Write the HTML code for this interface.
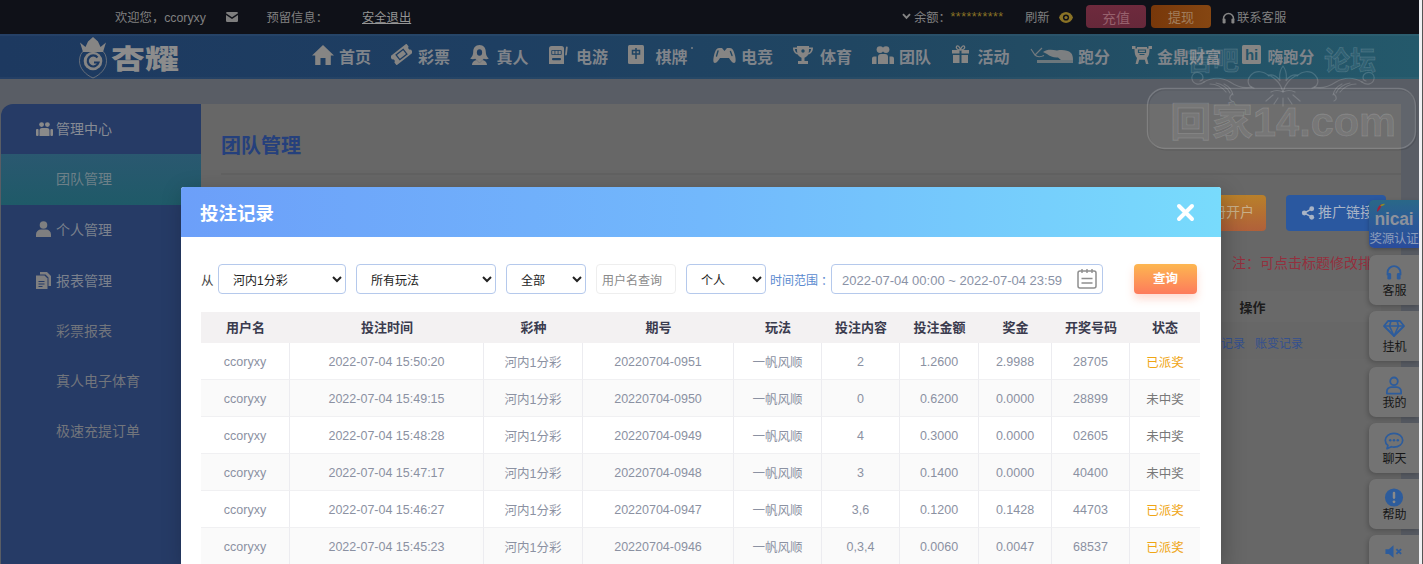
<!DOCTYPE html>
<html lang="zh-CN">
<head>
<meta charset="utf-8">
<title>团队管理</title>
<style>
*{box-sizing:border-box;margin:0;padding:0}
html,body{width:1423px;height:564px;overflow:hidden}
body{position:relative;background:#595d65;font-family:"Liberation Sans","Noto Sans CJK SC",sans-serif;font-size:13px;color:#333}
.abs{position:absolute}
/* top bar */
#top{left:0;top:0;width:1419px;height:34px;background:#0f1118;color:#808080;font-size:12.3px}
#top span{position:absolute;top:0;line-height:36px;white-space:nowrap}
/* nav */
#nav{left:0;top:34px;width:1419px;height:45px;background:linear-gradient(90deg,#1d3960 0%,#1e3f62 35%,#204662 60%,#224b63 72%,#235267 85%,#24596b 100%);box-shadow:inset 0 2px 0 rgba(255,255,255,.04),inset 0 -2px 0 rgba(255,255,255,.03)}
#nav .it{position:absolute;top:0;height:45px;line-height:47px;font-size:16px;font-weight:bold;color:#80848a;white-space:nowrap}
/* sidebar */
#side{left:1px;top:104px;width:200px;height:460px;background:#263b66;border-top-left-radius:12px;color:#7b818d;font-size:14px}
#side div{position:absolute;left:0;width:200px;white-space:nowrap;line-height:20px}
#main{left:201px;top:104px;width:1200px;height:460px;background:#676767}
/* scrollbar strip */
#sb1{left:1419px;top:0;width:3px;height:564px;background:#eff0f3}
#sb2{left:1422px;top:0;width:1px;height:564px;background:#555}
/* modal */
#modal{left:181px;top:187px;width:1040px;height:377px;background:#fff;border-radius:3px 3px 0 0;box-shadow:3px 6px 22px rgba(0,0,0,.25)}
#mh{left:0;top:0;width:1040px;height:50px;border-radius:3px 3px 0 0;background:linear-gradient(90deg,#6c9ff9 0%,#72b8fc 50%,#78dbfc 100%);color:#fff;font-size:18.500px;font-weight:bold;line-height:53px;padding-left:19px}
select,.inp{position:absolute;height:30px;border:1px solid #b5c9ec;border-radius:4px;background:#fff;font-size:12px;color:#222;font-family:inherit;padding:3px 0 0 10px}
table{position:absolute;left:20px;top:125px;width:999px;border-collapse:separate;border-spacing:0;table-layout:fixed;font-size:12.5px}
th{height:31px;background:#f3f1f2;color:#3a3b4e;font-weight:bold;font-size:13px;text-align:center;padding-bottom:2px}
td{height:37px;text-align:center;color:#8b91a2;border-right:1px solid #ececf0;border-bottom:1px solid #f0f0f2;padding-top:1px}
tr:nth-child(odd) td{background:#fafafa}
td:last-child{border-right:none}
td.y{color:#efa514}
td.n{color:#787878}
.btn{height:36px;border-radius:4px;font-size:14px;line-height:35px;text-align:center;white-space:nowrap}

#tb{left:1369px;top:200px;width:50px;height:364px}
#tb .badge{position:absolute;left:0;top:0;width:50px;height:48px;border-radius:5px 0 0 5px;background:linear-gradient(180deg,#2a6888 0%,#2b5a96 45%,#2a4c9c 100%);box-shadow:0 2px 4px rgba(0,0,0,.25);text-align:center;overflow:hidden;white-space:nowrap}
#tb .badge b{position:absolute;left:0;top:9px;width:50px;font-size:17.500px;line-height:20px;color:#8d929c;letter-spacing:-.2px}
#tb .badge i{position:absolute;left:-1px;top:31px;width:52px;font-style:normal;font-size:12.500px;line-height:16px;color:#8b9cba;letter-spacing:-.3px}
#tb .tbx{position:absolute;left:0;width:50px;height:50px;border-radius:7px 0 0 7px;background:#737373;box-shadow:-1px 2px 5px rgba(0,0,0,.22);text-align:center}
#tb .tbx svg{position:absolute;left:50%;top:9px;transform:translateX(-50%)}
#tb .tbx span{position:absolute;left:0;top:28px;width:51px;font-size:12px;line-height:16px;color:#161616}
</style>
</head>
<body>
<div id="top" class="abs">
<span style="left:115px">欢迎您，ccoryxy</span>
<svg class="abs" style="left:226px;top:11.500px" width="12" height="10" viewBox="0 0 12 10"><path d="M0 1.200A1.200 1.200 0 0 1 1.200 0h9.600A1.200 1.200 0 0 1 12 1.200L6 5.300zM0 2.900l6 4 6-4V8.800A1.200 1.200 0 0 1 10.800 10H1.200A1.200 1.200 0 0 1 0 8.800z" fill="#7e7e7e"/></svg>
<span style="left:266.500px">预留信息：</span>
<span style="left:362px;text-decoration:underline;color:#959595">安全退出</span>
<svg class="abs" style="left:902px;top:13px" width="9" height="7" viewBox="0 0 9 7"><path d="M1 1.200l3.500 3.600L8 1.200" fill="none" stroke="#858585" stroke-width="1.900"/></svg>
<span style="left:914px">余额：</span>
<span style="left:950.500px;color:#8a7326;letter-spacing:.45px;font-size:12.500px;line-height:34px">**********</span>
<span style="left:1025px">刷新</span>
<svg class="abs" style="left:1058.500px;top:12px" width="14" height="11" viewBox="0 0 14 11"><path d="M7 0c3.200 0 5.800 2.200 7 5.500C12.800 8.800 10.200 11 7 11S1.200 8.800 0 5.500C1.200 2.200 3.800 0 7 0z" fill="#8a7326"/><circle cx="7" cy="5.500" r="3.100" fill="#0f1118"/><circle cx="7" cy="5.500" r="1.600" fill="#8a7326"/></svg>
<svg class="abs" style="left:1222px;top:11.500px" width="13" height="12" viewBox="0 0 13 12"><path d="M1.500 8V6.500a5 5 0 0 1 10 0V8" fill="none" stroke="#858585" stroke-width="1.500"/><rect x=".6" y="6.500" width="3" height="5" rx="1.200" fill="#858585"/><rect x="9.400" y="6.500" width="3" height="5" rx="1.200" fill="#858585"/></svg>
<span style="left:1237px">联系客服</span>
</div>
<div class="abs" style="left:1086px;top:5px;width:60px;height:23px;border-radius:4px;background:linear-gradient(180deg,#6e2a3d,#66283a);color:#97616d;font-size:14px;text-align:center;line-height:26px">充值</div>
<div class="abs" style="left:1151px;top:5px;width:60px;height:23px;border-radius:4px;background:linear-gradient(90deg,#78380a,#854612);color:#a17e5e;font-size:13px;text-align:center;line-height:26px">提现</div>

<div id="nav" class="abs">
<svg class="abs" style="left:78px;top:2px" width="30" height="43" viewBox="0 0 30 43">
<path d="M2 6.500L7.500 11 10 5.500 15 1 20 5.500 22.500 11 28 6.500 25 16H5z" fill="#868584"/>
<path d="M15 12.500c7 0 13 2 13.500 12 .3 8-6.500 14.500-13.500 17.500C8 39 1.200 32.500 1.500 24.500 2 14.500 8 12.500 15 12.500z" fill="none" stroke="#868584" stroke-width="1" opacity=".7"/>
<circle cx="15" cy="25" r="9.300" fill="#868584"/>
<path d="M19.500 21.500a5.500 5.500 0 1 0 1 5h-4.500" fill="none" stroke="#1d3960" stroke-width="2.200"/>
</svg>
<div class="it" style="left:111px;top:3px;font-size:34px;font-weight:900;letter-spacing:0;color:#8c8c8c;line-height:45px;transform:scaleY(.81);transform-origin:50% 50%">杏耀</div>
<svg class="abs" style="left:312px;top:11px" width="22" height="20" viewBox="0 0 22 20"><path d="M11 0L22 10.500H18.800V20H13.500V13H8.500V20H3.200V10.500H0z" fill="#868584"/></svg>
<div class="it" style="left:339px">首页</div>
<svg class="abs" style="left:391px;top:10px" width="21" height="21" viewBox="0 0 21 21"><g transform="rotate(-38 10.500 10.500)"><path d="M0 5h21v3.600a2 2 0 0 0 0 3.800V16H0v-3.600a2 2 0 0 0 0-3.800z" fill="#868584"/><path d="M6 7.500h9v6H6z" fill="none" stroke="#1e3d62" stroke-width="1.300"/></g></svg>
<div class="it" style="left:418px">彩票</div>
<svg class="abs" style="left:470px;top:11px" width="19" height="20" viewBox="0 0 19 20"><path d="M9.500 0c4.200 0 6.300 3 6.300 7 0 3 1.200 5 3 6.500-1.500.8-3.500.8-5 .2L9.500 18l-4.300-4.300c-1.500.6-3.500.6-5-.2C2 12 3.200 10 3.200 7c0-4 2.100-7 6.300-7z" fill="#868584"/><ellipse cx="9.500" cy="7.500" rx="2.600" ry="3.300" fill="#1e3d62"/><path d="M2 20c0-3 2.500-4.500 4.500-5l3 3 3-3c2 .5 4.500 2 4.500 5z" fill="#868584"/></svg>
<div class="it" style="left:496.500px">真人</div>
<svg class="abs" style="left:549px;top:12px" width="20" height="18" viewBox="0 0 20 18"><path d="M2.500 0h10a2.500 2.500 0 0 1 2.500 2.500V18H0V2.500A2.500 2.500 0 0 1 2.500 0z" fill="#868584"/><rect x="2.300" y="4" width="10.400" height="5" rx="1" fill="#1f4162"/><rect x="3.200" y="4.800" width="2.300" height="3.400" fill="#868584"/><rect x="6.350" y="4.800" width="2.300" height="3.400" fill="#868584"/><rect x="9.500" y="4.800" width="2.300" height="3.400" fill="#868584"/><rect x="3" y="12" width="9" height="2.300" rx="1" fill="#1f4162"/><path d="M17.800 1.500l-.8 7" stroke="#868584" stroke-width="1.800" stroke-linecap="round"/></svg>
<div class="it" style="left:576px">电游</div>
<svg class="abs" style="left:628px;top:11px" width="16" height="19" viewBox="0 0 16 19"><rect x="0" y="0" width="16" height="19" rx="1.500" fill="#868584"/><path d="M8 3v11M4.500 5.500h7v3.500h-7z" fill="none" stroke="#1f4362" stroke-width="1.500"/></svg>
<div class="it" style="left:655.500px">棋牌</div>
<div class="abs" style="left:691px;top:13px;width:2px;height:2px;border-radius:1px;background:#7a7f86"></div>
<svg class="abs" style="left:713px;top:14px" width="23" height="15" viewBox="0 0 23 15"><path d="M6 0h3l2.500 3L14 0h3c2.500 0 4 3 5 7.500s1 7.500-1 7.500c-2 0-3.500-3-5-5h-9c-1.500 2-3 5-5 5s-2-3-1-7.500S3.500 0 6 0z" fill="#868584"/><path d="M5 3l-1.500 5M17.500 3.500l1.500 4" stroke="#204662" stroke-width="1.400" stroke-linecap="round"/></svg>
<div class="it" style="left:741px">电竞</div>
<svg class="abs" style="left:793px;top:12px" width="20" height="18" viewBox="0 0 20 18"><path d="M4 0h12v1.500h4c0 4-2 6.500-4.800 7-1 1.800-2.300 2.800-3.700 3.200V15H15v3H5v-3h3.500v-3.300C7.100 11.300 5.800 10.300 4.800 8.500 2 8 0 5.500 0 1.500h4zM1.800 3c.3 2 1.200 3.300 2.500 3.900C4.100 5.700 4 4.400 4 3zm16.400 0H16c0 1.400-.1 2.700-.3 3.900 1.300-.6 2.200-1.900 2.500-3.900z" fill="#868584"/><circle cx="10" cy="5" r="1.700" fill="#214863"/></svg>
<div class="it" style="left:820px">体育</div>
<svg class="abs" style="left:872px;top:12px" width="22" height="18" viewBox="0 0 22 18"><circle cx="8" cy="3.600" r="3.400" fill="#868584"/><circle cx="14" cy="3.600" r="3.400" fill="#868584"/><path d="M6 18V11a3 3 0 0 1 3-3h4a3 3 0 0 1 3 3v7z" fill="#868584"/><path d="M0 18v-5.500a2 2 0 0 1 2-2h2.500V18zM17.500 18v-7.500H20a2 2 0 0 1 2 2V18z" fill="#868584"/></svg>
<div class="it" style="left:899px">团队</div>
<svg class="abs" style="left:951.500px;top:11px" width="17" height="18" viewBox="0 0 17 18"><path d="M0 5h7.500v3.500H0zM9.500 5H17v3.500H9.500zM1 10h6.500v8H1zM9.500 10H16v8H9.500z" fill="#868584"/><path d="M8.500 5C6 5 3.500 3.500 4.500 1.500S8 2 8.500 5zm0 0c2.500 0 5-1.500 4-3.500S9 2 8.500 5z" fill="none" stroke="#868584" stroke-width="1.300"/></svg>
<div class="it" style="left:977.500px">活动</div>
<svg class="abs" style="left:1029px;top:12px" width="44" height="18" viewBox="0 0 44 18"><path d="M2 3l4 6 7-7M6 9c2 2 6 2 9 .5" fill="none" stroke="#868584" stroke-width="1.200" opacity=".8"/><path d="M14 6c4-3 9-2.500 14-1.500 5-1 11-.5 14 2.500 1.500 1.500 2 4 2 7H32l-3-2.500c-4 .5-8-1-11-3.500z" fill="#868584" opacity=".9"/><path d="M8 14h36v3H8z" fill="#868584" opacity=".75"/></svg>
<div class="it" style="left:1078px">跑分</div>
<svg class="abs" style="left:1130.500px;top:12px" width="22" height="18" viewBox="0 0 22 18"><path d="M1 0h3.500v2.500H6V1h10v1.500h1.500V0H21v3h-2.500c0 4-.5 7-2.500 9l1.500 6h-2.500l-1.200-4.200h-5.600L7 18H4.500L6 12C4 10 3.500 7 3.500 3H1z" fill="#868584"/><path d="M7.500 4h7v2.500h-7zM8.500 8.500h5" stroke="#235066" stroke-width="1.200" fill="none"/></svg>
<div class="it" style="left:1157px">金鼎财富</div>
<svg class="abs" style="left:1241.500px;top:11px" width="19" height="19" viewBox="0 0 19 19"><rect width="19" height="19" rx="1.500" fill="#868584"/><text x="9.600" y="15" font-family="Liberation Sans,sans-serif" font-weight="bold" font-size="15" text-anchor="middle" fill="#235468">hi</text></svg>
<div class="it" style="left:1267.500px;font-size:15.600px">嗨跑分</div>
</div>

<div id="side" class="abs">
<div style="top:50px;height:51px;background:linear-gradient(180deg,#2a5870,#1f5a68)"></div>
<div style="top:15px;padding-left:55px;color:#868b94">管理中心</div>
<div style="top:65px;padding-left:55px;color:#6d8088">团队管理</div>
<div style="top:116px;padding-left:55px">个人管理</div>
<div style="top:167px;padding-left:55px">报表管理</div>
<div style="top:217px;padding-left:55px;color:#72757c">彩票报表</div>
<div style="top:267px;padding-left:55px;color:#72757c">真人电子体育</div>
<div style="top:317px;padding-left:55px;color:#72757c">极速充提订单</div>
<svg class="abs" style="left:35px;top:18px" width="17" height="14" viewBox="0 0 17 14"><g fill="#8a8a8a"><circle cx="5.600" cy="2.600" r="2.400"/><circle cx="11.400" cy="2.600" r="2.400"/><path d="M3.500 14V8.500a2.500 2.500 0 0 1 2.500-2.500h5a2.500 2.500 0 0 1 2.500 2.500V14z"/><rect x="0" y="7" width="2.600" height="7" rx="1"/><rect x="14.400" y="7" width="2.600" height="7" rx="1"/></g></svg>
<svg class="abs" style="left:35px;top:117px" width="15" height="16" viewBox="0 0 15 16"><g fill="#7f7f80"><circle cx="7.500" cy="4" r="3.800"/><path d="M0 16v-2.500a5 5 0 0 1 5-5h5a5 5 0 0 1 5 5V16z"/></g></svg>
<svg class="abs" style="left:35px;top:168px" width="15" height="17" viewBox="0 0 15 17"><g fill="#7f7f80"><path d="M4 0h7l4 4v10h-2.500V5.500L9.500 2.500H4z"/><path d="M0 3.500h8.500l3 3V17H0z"/></g><path d="M2.500 9.500h6M2.500 12h6M2.500 14.500h4" stroke="#263b66" stroke-width="1.100"/></svg>
</div>
<div id="main" class="abs">
<div class="abs" style="left:20px;top:27px;font-size:20px;line-height:30px;font-weight:bold;color:#25407c">团队管理</div>
<div class="abs" style="left:20px;top:69px;width:1180px;height:2px;background:#616161"></div>
<div class="abs btn" style="left:985px;top:91px;width:80px;background:linear-gradient(180deg,#b9802a,#b0603a);color:#c9b08a">注册开户</div>
<div class="abs btn" style="left:1085px;top:91px;width:99.500px;background:#2a58a0;color:#a9b4c6;text-align:left;padding-left:32px">推广链接</div>
<svg class="abs" style="left:1099.500px;top:102px" width="14" height="14" viewBox="0 0 14 15"><g fill="#a9b4c6"><circle cx="11" cy="3" r="2.6"/><circle cx="3" cy="7.5" r="2.6"/><circle cx="11" cy="12" r="2.6"/></g><path d="M11 3L3 7.5L11 12" stroke="#a9b4c6" stroke-width="1.6" fill="none"/></svg>
<div class="abs" style="left:1031px;top:148px;font-size:14px;color:#94303e;white-space:nowrap;width:140px;overflow:hidden">注：可点击标题修改排</div>
<div class="abs" style="left:0;top:187px;width:1180px;height:31px;background:#696969"></div>
<div class="abs" style="left:1038.500px;top:192.500px;font-size:13px;font-weight:bold;color:#1c1c1c">操作</div>
<div class="abs" style="left:0;top:255px;width:1180px;height:1px;background:#686868"></div>
<div class="abs" style="left:996px;top:230px;font-size:12px;color:#34508e;white-space:nowrap">投注记录&nbsp;&nbsp;&nbsp;账变记录</div>
</div>


<!-- watermark -->
<svg id="wm" class="abs" style="left:1140px;top:40px" width="279" height="115" viewBox="0 0 279 115">
<g font-family="Liberation Sans,Noto Sans CJK SC,sans-serif" font-weight="bold" fill="rgba(255,255,255,.08)" stroke="rgba(255,255,255,.15)" stroke-width=".8">
<text x="47" y="30" font-size="26" textLength="52">吉吧</text>
<text x="184" y="30" font-size="26" textLength="52">论坛</text>
<text x="30" y="96" font-size="40" textLength="226" lengthAdjust="spacingAndGlyphs">回家14.com</text>
</g>
<rect x="8.500" y="49.700" width="268" height="60" rx="17" fill="none" stroke="rgba(0,0,0,.10)" stroke-width="1.400"/><rect x="7.500" y="48.500" width="268" height="60" rx="17" fill="rgba(255,255,255,.05)" stroke="rgba(255,255,255,.17)" stroke-width="1.400"/>
<g fill="none" stroke="rgba(255,255,255,.16)" stroke-width="1.200" stroke-linecap="round">
<path d="M143 52c-2-8-8-14-14-17 4-1 9 2 11 6-1-6 0-11 3-15 3 4 4 9 3 15 2-4 7-7 11-6-6 3-12 9-14 17z"/>
<path d="M143 52c-4-2-8-2-12 0M143 52c4-2 8-2 12 0M138 58l-4 6M143 58v8M148 58l4 6M133 55l-7 6M153 55l7 6"/>
<path d="M129 36c-5-5-13-6-18-1s-3 12 3 13M157 36c5-5 13-6 18-1s3 12-3 13"/>
<path d="M112 47c-8 2-16-1-22-5-8-5-18-5-26 0M174 47c8 2 16-1 22-5 8-5 18-5 26 0"/>
<path d="M64 42c-5 4-11 2-12-3s4-8 8-6 4 7 0 8M222 42c5 4 11 2 12-3s-4-8-8-6-4 7 0 8"/>
<path d="M70 44c6 0 12 3 16 8M76 43c6 1 12 5 14 10M84 44c4 2 8 6 9 11M216 44c-6 0-12 3-16 8M210 43c-6 1-12 5-14 10M202 44c-4 2-8 6-9 11"/>
<path d="M92 54c-3 3-3 6 0 7M194 54c3 3 3 6 0 7"/>
</g>
</svg>
<div id="modal" class="abs">
<div id="mh" class="abs">投注记录</div>
<svg class="abs" style="left:995px;top:16px" width="19" height="19" viewBox="0 0 19 19"><path d="M3 3l13 13M16 3L3 16" stroke="#fff" stroke-width="4" stroke-linecap="round"/></svg>

<div class="abs" style="left:20px;top:84.500px;font-size:12.500px;line-height:18px;color:#444">从</div>
<select style="left:37px;top:77px;width:128px"><option>河内1分彩</option></select>
<select style="left:175px;top:77px;width:140px"><option>所有玩法</option></select>
<select style="left:325px;top:77px;width:80px"><option>全部</option></select>
<div class="inp" style="left:415px;top:77px;width:80px;border-color:#eee;color:#8a8a8a;line-height:32px;padding:0 0 0 5px">用户名查询</div>
<select style="left:505px;top:77px;width:80px"><option>个人</option></select>
<div class="abs" style="left:589px;top:84px;font-size:12px;color:#5a8ad0;white-space:nowrap">时间范围<span style="margin-left:3px">：</span></div>
<div class="inp" style="left:650px;top:77px;width:272px;color:#8a92a6;line-height:31px;padding:0 0 0 10px;font-size:13px">2022-07-04 00:00 ~ 2022-07-04 23:59</div>
<svg class="abs" style="left:896px;top:81px" width="20" height="21" viewBox="0 0 20 21"><rect x="1" y="3" width="18" height="17" rx="2" fill="none" stroke="#8e8e8e" stroke-width="1.500"/><path d="M5 1v4M10 1v4M15 1v4" stroke="#8e8e8e" stroke-width="1.400"/><path d="M4.500 10.500h11M4.500 15h11" stroke="#8e8e8e" stroke-width="1.600"/></svg>
<div class="abs" style="left:953px;top:77px;width:63px;height:30px;border-radius:4px;background:linear-gradient(180deg,#fdb650,#fd7b5c);color:#fff;font-size:12.500px;font-weight:bold;text-align:center;line-height:31px;box-shadow:0 5px 9px rgba(252,125,88,.28)">查询</div>
<table>
<colgroup><col style="width:89px"><col style="width:194px"><col style="width:99px"><col style="width:151px"><col style="width:88px"><col style="width:78px"><col style="width:79px"><col style="width:73px"><col style="width:78px"><col style="width:70px"></colgroup>
<tr><th>用户名</th><th>投注时间</th><th>彩种</th><th>期号</th><th>玩法</th><th>投注内容</th><th>投注金额</th><th>奖金</th><th>开奖号码</th><th>状态</th></tr>
<tr><td>ccoryxy</td><td>2022-07-04 15:50:20</td><td>河内1分彩</td><td>20220704-0951</td><td>一帆风顺</td><td>2</td><td>1.2600</td><td>2.9988</td><td>28705</td><td class="y">已派奖</td></tr>
<tr><td>ccoryxy</td><td>2022-07-04 15:49:15</td><td>河内1分彩</td><td>20220704-0950</td><td>一帆风顺</td><td>0</td><td>0.6200</td><td>0.0000</td><td>28899</td><td class="n">未中奖</td></tr>
<tr><td>ccoryxy</td><td>2022-07-04 15:48:28</td><td>河内1分彩</td><td>20220704-0949</td><td>一帆风顺</td><td>4</td><td>0.3000</td><td>0.0000</td><td>02605</td><td class="n">未中奖</td></tr>
<tr><td>ccoryxy</td><td>2022-07-04 15:47:17</td><td>河内1分彩</td><td>20220704-0948</td><td>一帆风顺</td><td>3</td><td>0.1400</td><td>0.0000</td><td>40400</td><td class="n">未中奖</td></tr>
<tr><td>ccoryxy</td><td>2022-07-04 15:46:27</td><td>河内1分彩</td><td>20220704-0947</td><td>一帆风顺</td><td>3,6</td><td>0.1200</td><td>0.1428</td><td>44703</td><td class="y">已派奖</td></tr>
<tr><td>ccoryxy</td><td>2022-07-04 15:45:23</td><td>河内1分彩</td><td>20220704-0946</td><td>一帆风顺</td><td>0,3,4</td><td>0.0060</td><td>0.0047</td><td>68537</td><td class="y">已派奖</td></tr>
</table>
</div>


<!-- right toolbar -->
<div id="tb" class="abs">
<div class="badge"><b>nicai</b><i>奖源认证</i><svg style="position:absolute;left:7px;top:3px" width="10" height="10" viewBox="0 0 10 10"><path d="M1 9C1 5 3 2 6 1 5 4 4 7 1 9z" fill="#a0203a"/><path d="M4 3C5 1.500 7 .5 9 1 8 2.500 6 3.500 4 3z" fill="#8a8a2a"/></svg></div>
<div class="tbx" style="top:55px"><svg viewBox="0 0 20 18" width="19" height="17"><path d="M3.2 12V9a6.8 6.8 0 0 1 13.6 0v3" fill="none" stroke="#2d5c9c" stroke-width="2"/><rect x="3" y="9.5" width="4" height="7" rx="1.5" fill="#2d5c9c"/><rect x="13" y="9.5" width="4" height="7" rx="1.5" fill="#2d5c9c"/></svg><span>客服</span></div>
<div class="tbx" style="top:111px"><svg viewBox="0 0 22 17" width="22" height="17"><path d="M5 1H17L21 6L11 16L1 6Z" fill="none" stroke="#2d5c9c" stroke-width="1.8" stroke-linejoin="round"/><path d="M1 6H21M8 1L6.5 6L11 16L15.5 6L14 1" fill="none" stroke="#2d5c9c" stroke-width="1.6" stroke-linejoin="round"/></svg><span>挂机</span></div>
<div class="tbx" style="top:167px"><svg viewBox="0 0 20 20" width="19" height="19"><circle cx="10" cy="5.6" r="4" fill="none" stroke="#2d5c9c" stroke-width="1.9"/><path d="M2.5 18.5v-2.2a4.6 4.6 0 0 1 4.6-4.6h5.8a4.6 4.6 0 0 1 4.6 4.6v2.2z" fill="none" stroke="#2d5c9c" stroke-width="1.9" stroke-linejoin="round"/></svg><span>我的</span></div>
<div class="tbx" style="top:223px"><svg viewBox="0 0 22 19" width="21" height="18"><path d="M11 1.5c5.2 0 9.2 3.2 9.2 7.2s-4 7.2-9.2 7.2c-1 0-2-.1-2.9-.4L3.6 17.6l1-3.4C2.900 12.900 1.800 10.900 1.800 8.700 1.800 4.700 5.800 1.500 11 1.500z" fill="none" stroke="#2d5c9c" stroke-width="1.8" stroke-linejoin="round"/><circle cx="7" cy="8.800" r="1.300" fill="#2d5c9c"/><circle cx="11" cy="8.800" r="1.300" fill="#2d5c9c"/><circle cx="15" cy="8.800" r="1.300" fill="#2d5c9c"/></svg><span>聊天</span></div>
<div class="tbx" style="top:279px"><svg viewBox="0 0 20 20" width="19" height="19"><circle cx="10" cy="10" r="9.5" fill="#2d5c9c"/><rect x="8.700" y="4" width="2.600" height="7.500" rx="1.200" fill="#8a8a8a"/><circle cx="10" cy="14.600" r="1.500" fill="#8a8a8a"/></svg><span>帮助</span></div>
<div class="tbx" style="top:335px"><svg viewBox="0 0 20 15" width="19" height="15"><path d="M1 5h3.500L9.500 1v13L4.500 10H1z" fill="#2d5c9c"/><path d="M12.500 5l5 5M17.500 5l-5 5" stroke="#2d5c9c" stroke-width="2"/></svg></div>
</div>
<div id="sb1" class="abs"></div>
<div id="sb2" class="abs"></div>
</body>
</html>
